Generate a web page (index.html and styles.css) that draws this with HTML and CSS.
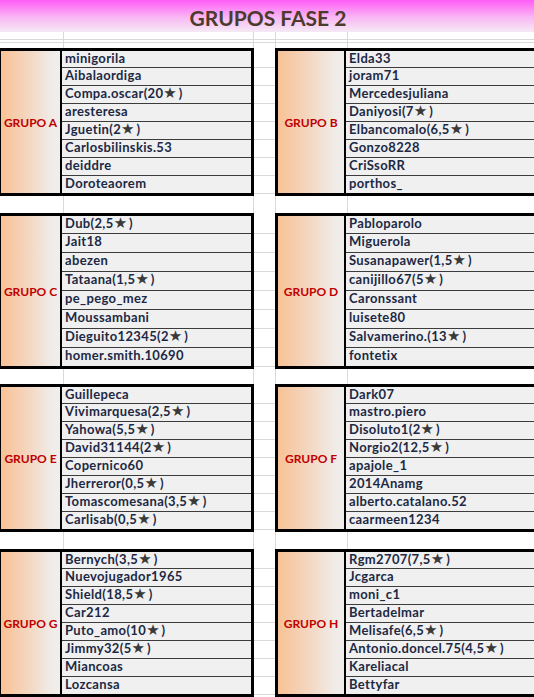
FILE: index.html
```html
<!DOCTYPE html>
<html>
<head>
<meta charset="utf-8">
<link rel="stylesheet" href="styles.css">
</head>
<body>
<div class="sheet">
  <div class="title">GRUPOS FASE 2</div>
  <div class="spacer spacer-top"></div>

  <div class="pair ra">
    <div class="block left">
      <div class="label">GRUPO A</div>
      <div class="names">
        <div class="name">minigorila</div>
        <div class="name">Aibalaordiga</div>
        <div class="name">Compa.oscar(20<span class="star">★</span>)</div>
        <div class="name">aresteresa</div>
        <div class="name">Jguetin(2<span class="star">★</span>)</div>
        <div class="name">Carlosbilinskis.53</div>
        <div class="name">deiddre</div>
        <div class="name">Doroteaorem</div>
      </div>
    </div>
    <div class="mid"></div>
    <div class="block right">
      <div class="label">GRUPO B</div>
      <div class="names">
        <div class="name">Elda33</div>
        <div class="name">joram71</div>
        <div class="name">Mercedesjuliana</div>
        <div class="name">Daniyosi(7<span class="star">★</span>)</div>
        <div class="name">Elbancomalo(6,5<span class="star">★</span>)</div>
        <div class="name">Gonzo8228</div>
        <div class="name">CriSsoRR</div>
        <div class="name">porthos_</div>
      </div>
    </div>
  </div>

  <div class="spacer blank b1"></div>

  <div class="pair rc">
    <div class="block left">
      <div class="label">GRUPO C</div>
      <div class="names">
        <div class="name">Dub(2,5<span class="star">★</span>)</div>
        <div class="name">Jait18</div>
        <div class="name">abezen</div>
        <div class="name">Tataana(1,5<span class="star">★</span>)</div>
        <div class="name">pe_pego_mez</div>
        <div class="name">Moussambani</div>
        <div class="name">Dieguito12345(2<span class="star">★</span>)</div>
        <div class="name">homer.smith.10690</div>
      </div>
    </div>
    <div class="mid"></div>
    <div class="block right">
      <div class="label">GRUPO D</div>
      <div class="names">
        <div class="name">Pabloparolo</div>
        <div class="name">Miguerola</div>
        <div class="name">Susanapawer(1,5<span class="star">★</span>)</div>
        <div class="name">canijillo67(5<span class="star">★</span>)</div>
        <div class="name">Caronssant</div>
        <div class="name">luisete80</div>
        <div class="name">Salvamerino.(13<span class="star">★</span>)</div>
        <div class="name">fontetix</div>
      </div>
    </div>
  </div>

  <div class="spacer blank b2"></div>

  <div class="pair re">
    <div class="block left">
      <div class="label">GRUPO E</div>
      <div class="names">
        <div class="name">Guillepeca</div>
        <div class="name">Vivimarquesa(2,5<span class="star">★</span>)</div>
        <div class="name">Yahowa(5,5<span class="star">★</span>)</div>
        <div class="name">David31144(2<span class="star">★</span>)</div>
        <div class="name">Copernico60</div>
        <div class="name">Jherreror(0,5<span class="star">★</span>)</div>
        <div class="name">Tomascomesana(3,5<span class="star">★</span>)</div>
        <div class="name">Carlisab(0,5<span class="star">★</span>)</div>
      </div>
    </div>
    <div class="mid"></div>
    <div class="block right">
      <div class="label">GRUPO F</div>
      <div class="names">
        <div class="name">Dark07</div>
        <div class="name">mastro.piero</div>
        <div class="name">Disoluto1(2<span class="star">★</span>)</div>
        <div class="name">Norgio2(12,5<span class="star">★</span>)</div>
        <div class="name">apajole_1</div>
        <div class="name">2014Anamg</div>
        <div class="name">alberto.catalano.52</div>
        <div class="name">caarmeen1234</div>
      </div>
    </div>
  </div>

  <div class="spacer blank b3"></div>

  <div class="pair rg">
    <div class="block left">
      <div class="label">GRUPO G</div>
      <div class="names">
        <div class="name">Bernych(3,5<span class="star">★</span>)</div>
        <div class="name">Nuevojugador1965</div>
        <div class="name">Shield(18,5<span class="star">★</span>)</div>
        <div class="name">Car212</div>
        <div class="name">Puto_amo(10<span class="star">★</span>)</div>
        <div class="name">Jimmy32(5<span class="star">★</span>)</div>
        <div class="name">Miancoas</div>
        <div class="name">Lozcansa</div>
      </div>
    </div>
    <div class="mid"></div>
    <div class="block right">
      <div class="label">GRUPO H</div>
      <div class="names">
        <div class="name">Rgm2707(7,5<span class="star">★</span>)</div>
        <div class="name">Jcgarca</div>
        <div class="name">moni_c1</div>
        <div class="name">Bertadelmar</div>
        <div class="name">Melisafe(6,5<span class="star">★</span>)</div>
        <div class="name">Antonio.doncel.75(4,5<span class="star">★</span>)</div>
        <div class="name">Kareliacal</div>
        <div class="name">Bettyfar</div>
      </div>
    </div>
  </div>
</div>
</body>
</html>
```

FILE: styles.css
```css
html, body {
  margin: 0;
  padding: 0;
  background: #ffffff;
}

.sheet {
  width: 534px;
  height: 697px;
  overflow: hidden;
  font-family: Lato, "Open Sans", sans-serif;
}

.title {
  height: 32px;
  background: linear-gradient(to bottom, #ff5cf6 0%, #f9b8f4 55%, #f5eaf5 100%);
  color: #4b3b2c;
  font-weight: 700;
  font-size: 21px;
  line-height: 35px;
  text-align: center;
  padding-left: 2px;
  box-sizing: border-box;
}

.spacer {
  --g: #d9d9d9;
  background-image:
    linear-gradient(var(--g), var(--g)),
    linear-gradient(var(--g), var(--g)),
    linear-gradient(var(--g), var(--g)),
    linear-gradient(var(--g), var(--g));
  background-repeat: no-repeat;
  background-size: 1px 100%;
  background-position: 63px 0, 253px 0, 275px 0, 347px 0;
}

.spacer-top {
  height: 16px;
  background-image:
    linear-gradient(var(--g), var(--g)),
    linear-gradient(var(--g), var(--g)),
    linear-gradient(var(--g), var(--g)),
    linear-gradient(var(--g), var(--g)),
    linear-gradient(var(--g), var(--g)),
    linear-gradient(var(--g), var(--g));
  background-size: 1px 100%, 1px 100%, 1px 100%, 1px 100%, 100% 1px, 100% 1px;
  background-position: 63px 0, 253px 0, 275px 0, 347px 0, 0 7px, 0 10px;
}

.b1 { height: 17px; }
.b2 { height: 15px; }
.b3 { height: 17px; }

.pair {
  display: flex;
  --rh: 18px;
}

.rc { --rh: 19px; }

.block {
  display: flex;
  border: 3px solid #000;
  box-sizing: border-box;
}

.left {
  width: 254px;
  border-left-width: 1px;
}

.right {
  flex: 1;
  border-right: none;
}

.mid {
  width: 21px;
  background-image: repeating-linear-gradient(to bottom, #ffffff 0, #ffffff calc(var(--rh) - 1px), #dadada calc(var(--rh) - 1px), #dadada var(--rh));
  background-position: 0 2px;
}

.label {
  display: flex;
  align-items: center;
  justify-content: center;
  background: linear-gradient(to right, #f8c296 0%, #f4d6bf 45%, #f0ebe7 85%, #f0eeec 100%);
  border-right: 2px solid #000;
  color: #c00000;
  font-weight: 700;
  font-size: 12px;
  white-space: nowrap;
  padding-top: 1px;
  box-sizing: border-box;
}

.left .label { width: 61px; }
.right .label { width: 68px; }

.names {
  flex: 1;
  display: flex;
  flex-direction: column;
  background: #f0f0f0;
}

.name {
  height: var(--rh);
  box-sizing: border-box;
  border-top: 1px solid #3c3c3c;
  padding-left: 3px;
  color: #1d2944;
  font-weight: 700;
  font-size: 13px;
  letter-spacing: 0.35px;
  line-height: 15px;
  white-space: nowrap;
}

.name:first-child {
  border-top: none;
  height: calc(var(--rh) - 2px);
  line-height: 14px;
}

.star {
  font-family: "DejaVu Sans", sans-serif;
  color: #3a3a3a;
  font-size: 15px;
  line-height: 0;
  letter-spacing: 0;
  margin-right: 2px;
}
```
